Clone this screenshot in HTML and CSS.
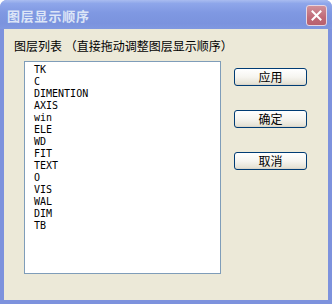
FILE: index.html
```html
<!DOCTYPE html>
<html lang="zh-CN">
<head>
    <meta charset="UTF-8">
    <title>图层显示顺序</title>
    <link rel="stylesheet" href="styles.css">
</head>
<body>
    <div class="window">
        <div class="titlebar">
            <span class="title">图层显示顺序</span>
            <button class="close-btn">
                <svg width="11" height="11" viewBox="0 0 11 11">
                    <path d="M1.5 1.5 L9.5 9.5 M9.5 1.5 L1.5 9.5" stroke="#fff" stroke-width="2" stroke-linecap="square"/>
                </svg>
            </button>
        </div>

        <div class="client">
            <div class="caption">图层列表 （直接拖动调整图层显示顺序）</div>

            <div class="content">
                <ul class="layer-list">
                    <li>TK</li>
                    <li>C</li>
                    <li>DIMENTION</li>
                    <li>AXIS</li>
                    <li>win</li>
                    <li>ELE</li>
                    <li>WD</li>
                    <li>FIT</li>
                    <li>TEXT</li>
                    <li>O</li>
                    <li>VIS</li>
                    <li>WAL</li>
                    <li>DIM</li>
                    <li>TB</li>
                </ul>

                <div class="button-col">
                    <button class="xp-btn">应用</button>
                    <button class="xp-btn">确定</button>
                    <button class="xp-btn">取消</button>
                </div>
            </div>
        </div>
    </div>
</body>
</html>
```

FILE: styles.css
```css
* {
    margin: 0;
    padding: 0;
    box-sizing: border-box;
}

body {
    width: 332px;
    height: 304px;
    overflow: hidden;
    font-family: 'Noto Sans CJK SC', sans-serif;
    font-size: 12px;
}

.window {
    width: 332px;
    height: 304px;
    display: flex;
    flex-direction: column;
    background: #7d92dd;
    border-radius: 7px 7px 0 0;
    overflow: hidden;
}

.titlebar {
    height: 29px;
    flex: none;
    display: flex;
    align-items: center;
    justify-content: space-between;
    padding: 0 5px 0 7px;
    background: linear-gradient(180deg, #a9bcf0 0%, #8ea6ea 12%, #7f98e2 45%, #7b93de 80%, #8098e0 100%);
}

.title {
    color: #dce5f7;
    font-size: 13px;
    font-weight: bold;
    letter-spacing: 0.8px;
    line-height: 1;
    margin-top: 1px;
}

.close-btn {
    width: 21px;
    height: 21px;
    border: 1px solid #e6d6e2;
    border-radius: 3px;
    background: linear-gradient(180deg, #d0919a, #c06a78 60%, #b8606e);
    display: flex;
    align-items: center;
    justify-content: center;
    margin-top: 1px;
}

.client {
    flex: 1;
    margin: 0 4px 4px 4px;
    background: #ece9d8;
    padding: 8px 0 0 10px;
}

.caption {
    color: #000;
    line-height: 17px;
    height: 17px;
}

.content {
    display: flex;
    align-items: flex-start;
    margin-top: 7px;
    padding-left: 10px;
}

.layer-list {
    list-style: none;
    width: 197px;
    height: 213px;
    border: 1px solid #7f9db9;
    background: #fff;
    padding: 2px 0 0 9px;
}

.layer-list li {
    font-family: 'DejaVu Sans Mono', monospace;
    font-size: 10px;
    line-height: 12px;
    height: 12px;
    color: #000;
}

.button-col {
    display: flex;
    flex-direction: column;
    gap: 24px;
    margin-left: 13px;
    margin-top: 7px;
}

.xp-btn {
    width: 73px;
    height: 18px;
    border: 1px solid #003c74;
    border-radius: 3px;
    background: linear-gradient(180deg, #ffffff 0%, #f6f5f0 50%, #e6e3d6 90%, #d6d0c5 100%);
    font-family: 'Noto Sans CJK SC', sans-serif;
    font-size: 12px;
    line-height: 16px;
    color: #000;
}
```
